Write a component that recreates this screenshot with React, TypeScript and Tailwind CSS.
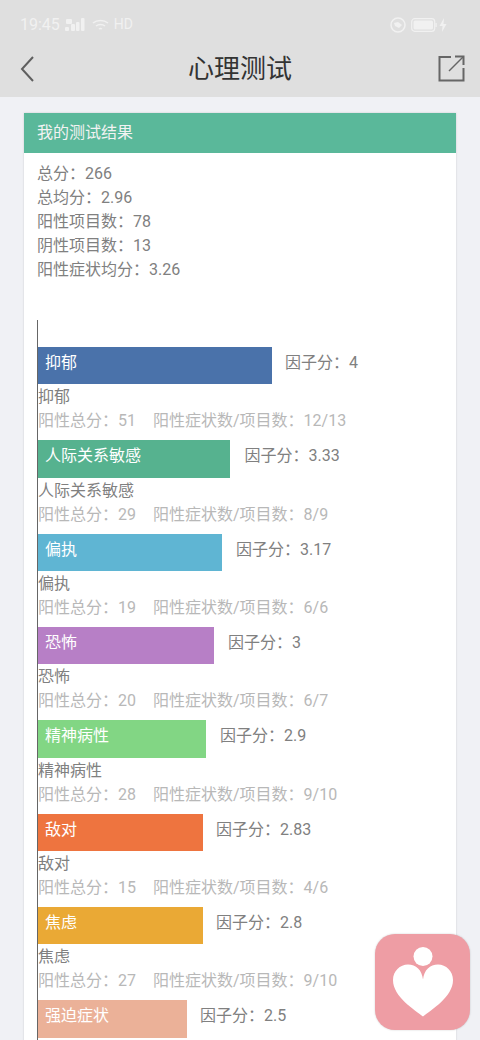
const rows = [
  { name: '抑郁', score: '4', total: '51', ratio: '12/13', color: '#4a72aa', width: 234, gap: 13 },
  { name: '人际关系敏感', score: '3.33', total: '29', ratio: '8/9', color: '#56b28f', width: 192, gap: 14.5 },
  { name: '偏执', score: '3.17', total: '19', ratio: '6/6', color: '#5fb5d3', width: 184, gap: 14 },
  { name: '恐怖', score: '3', total: '20', ratio: '6/7', color: '#b77fc6', width: 176, gap: 14 },
  { name: '精神病性', score: '2.9', total: '28', ratio: '9/10', color: '#82d684', width: 168, gap: 14 },
  { name: '敌对', score: '2.83', total: '15', ratio: '4/6', color: '#ee743f', width: 165, gap: 13 },
  { name: '焦虑', score: '2.8', total: '27', ratio: '9/10', color: '#eaa935', width: 165, gap: 13 },
  { name: '强迫症状', score: '2.5', total: '', ratio: '', color: '#ebb198', width: 149, gap: 13 },
]

const summary = ['总分：266', '总均分：2.96', '阳性项目数：78', '阴性项目数：13', '阳性症状均分：3.26']

const StatusBar = () => (
  <div className="flex h-[48px] items-center justify-between pl-[20px] pr-[33px] pt-[1px] text-[16px] text-[#f1f1f1]">
    <div className="flex items-center">
      <span>19:45</span>
      <svg className="ml-[5px]" width="20" height="14" viewBox="0 0 20 14" fill="#f1f1f1">
        <rect x="0" y="9" width="4" height="4" rx="1" />
        <rect x="6" y="6" width="4" height="7" rx="1" />
        <rect x="11" y="4" width="3.5" height="9" rx="1" />
        <rect x="16" y="0" width="3.5" height="13" rx="1" />
        <rect x="1" y="1" width="6" height="5" rx="1" />
      </svg>
      <svg className="ml-[7px]" width="17" height="14" viewBox="0 0 17 14" fill="none" stroke="#f1f1f1" strokeWidth="1.5">
        <path d="M1 5c4-3.500 11-3.500 15 0" />
        <path d="M4 8c2.500-2 6.500-2 9 0" />
        <path d="M7 11c1-.8 2-.8 3 0" />
      </svg>
      <span className="ml-[5px] text-[14px]">HD</span>
    </div>
    <div className="flex items-center">
      <svg width="16" height="16" viewBox="0 0 16 16">
        <circle cx="8" cy="8" r="7" fill="none" stroke="#f1f1f1" strokeWidth="1.5" />
        <path d="M4 6l4-1 4 3-3 3-4-2z" fill="#f1f1f1" />
      </svg>
      <svg className="ml-[5px]" width="26" height="14" viewBox="0 0 26 14">
        <rect x="0.700" y="0.700" width="23" height="12.600" rx="3" fill="none" stroke="#f1f1f1" strokeWidth="1.200" />
        <rect x="2.500" y="2.500" width="19.500" height="9" rx="1.500" fill="#f1f1f1" />
        <rect x="24.500" y="5" width="1.200" height="4" fill="#f1f1f1" />
      </svg>
      <svg className="ml-[2px]" width="8" height="14" viewBox="0 0 8 14" fill="#f1f1f1">
        <path d="M5 0L0.500 8H3.500L3 14 7.500 6H4.500z" />
      </svg>
    </div>
  </div>
)

const NavBar = () => (
  <div className="flex h-[49px] items-center justify-between pl-[20px] pr-[15px] pb-[8px]">
    <div className="w-[22px]">
      <svg width="14" height="28" viewBox="0 0 14 28" fill="none" stroke="#5f5f5f" strokeWidth="2">
        <path d="M13 2L2 14l11 12" />
      </svg>
    </div>
    <div className="text-[26px] leading-none text-[#333333]">心理测试</div>
    <svg width="27" height="27" viewBox="0 0 27 27" fill="none" stroke="#666666" strokeWidth="2">
      <path d="M13 2H1.500v23.500H25.500V13" />
      <path d="M11 16L25 2" strokeWidth="1.500" />
      <path d="M17 1.500h8.500V10" />
    </svg>
  </div>
)

const Row = ({ row }: { row: (typeof rows)[number] }) => (
  <div className="h-[93.33px]">
    <div className="flex items-center">
      <div
        className="flex h-[37.33px] items-center pb-[5px] pl-[7px] text-white"
        style={{ width: row.width, backgroundColor: row.color }}
      >
        {row.name}
      </div>
      <div className="pb-[5px] text-[#808080]" style={{ marginLeft: row.gap }}>
        因子分：{row.score}
      </div>
    </div>
    {row.total && (
      <div className="pt-[1px] leading-[24px]">
        <div className="text-[#808080]">{row.name}</div>
        <div className="whitespace-nowrap text-[#b8b8b8]">
          阳性总分：{row.total}
          <span className="ml-[17px]">阳性症状数/项目数：{row.ratio}</span>
        </div>
      </div>
    )}
  </div>
)

export default function App() {
  return (
    <div
      className="relative h-[1040px] w-[480px] overflow-hidden bg-[#f0f1f5] text-[16px]"
      style={{ fontFamily: 'Roboto, "Noto Sans CJK SC", sans-serif' }}
    >
      <div className="h-[97px] bg-[#dfdfdf]">
        <StatusBar />
        <NavBar />
      </div>

      <div className="mx-[24px] mt-[16px] h-[940px] bg-white shadow-[0_0_2px_rgba(0,0,0,0.15)]">
        <div className="flex h-[40px] items-center bg-[#5ab89a] pl-[13px] text-[#f2f2f2]">我的测试结果</div>
        <div className="h-[167px] pl-[13px] pt-[9px] leading-[24px] text-[#808080]">
          {summary.map((line) => (
            <div key={line}>{line}</div>
          ))}
        </div>
        <div className="ml-[13px] border-l border-[#666666] pt-[27px]">
          {rows.map((row) => (
            <Row key={row.name} row={row} />
          ))}
        </div>
      </div>

      <div className="absolute bottom-[10px] right-[10px] flex h-[96px] w-[95px] items-start justify-center rounded-[20px] bg-[#ee9da4] pt-[13px] shadow-[0_0_2px_rgba(0,0,0,0.2)]">
        <svg width="60" height="70" viewBox="0 0 60 70" fill="white">
          <circle cx="30" cy="9.500" r="9.500" />
          <path d="M30 69.500C22 63 0 50 0 33 0 24 7 17.500 15 17.500c8 0 14 5.500 15 15 1-9.500 7-15 15-15 8 0 15 6.500 15 15.500 0 17-22 30-30 36.500z" />
        </svg>
      </div>
    </div>
  )
}
